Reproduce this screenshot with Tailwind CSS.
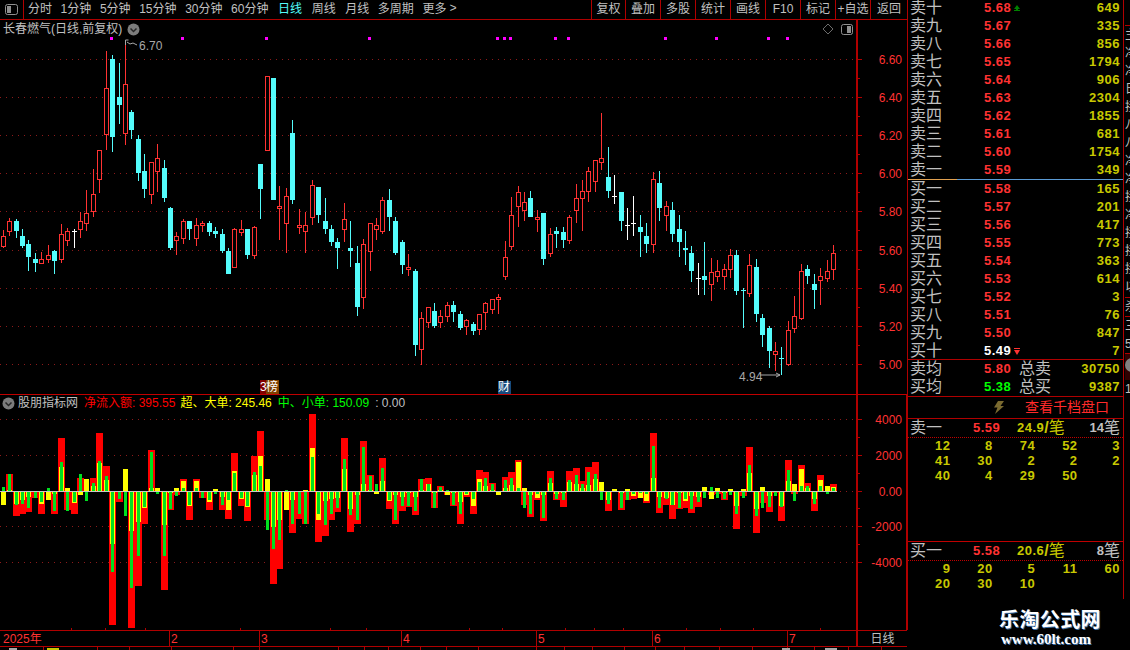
<!DOCTYPE html>
<html lang="zh">
<head>
  <meta charset="UTF-8" />
  <title>长春燃气 日线</title>
  <script src="https://cdn.jsdelivr.net/npm/@tailwindcss/browser@4"></script>
</head>
<body class="h-[650px] w-[1130px] overflow-hidden bg-black text-[12px] text-[#c0c0c0] [font-family:'Liberation_Sans','Noto_Sans_CJK_SC',sans-serif]">
<div class="relative flex h-[650px] w-[1130px]">

  <!-- left: toolbar + charts -->
  <div class="flex w-[907px] flex-col">
    <div class="flex h-[20px] border-b border-[#b00000] leading-[18px]">
      <div class="flex w-[24px] items-center justify-center border-r border-[#b00000]">
        <svg width="13" height="11" viewBox="0 0 13 11"><rect x="0.5" y="0.5" width="12" height="10" rx="2" fill="none" stroke="#909090"/><rect x="2" y="2" width="4" height="7" fill="#909090"/></svg>
      </div>
      <div class="ml-[4px] flex gap-[8.6px]">
        <span>分时</span><span>1分钟</span><span>5分钟</span><span>15分钟</span><span>30分钟</span><span>60分钟</span>
        <span class="ml-[1px] text-[#54fcfc]">日线</span><span class="ml-[1px]">周线</span><span class="ml-[1px]">月线</span><span>多周期</span><span>更多</span>
      </div>
      <span class="ml-[3px] [font-family:'Liberation_Mono']">&gt;</span>
      <div class="ml-auto flex text-center">
        <span class="w-[34px] border-l border-[#b00000]">复权</span>
        <span class="w-[35px] border-l border-[#b00000]">叠加</span>
        <span class="w-[35px] border-l border-[#b00000]">多股</span>
        <span class="w-[35px] border-l border-[#b00000]">统计</span>
        <span class="w-[35px] border-l border-[#b00000]">画线</span>
        <span class="w-[35px] border-l border-[#b00000]">F10</span>
        <span class="w-[35px] border-l border-[#b00000]">标记</span>
        <span class="w-[35px] border-l border-[#b00000]">+自选</span>
        <span class="w-[37px] border-l border-[#b00000]">返回</span>
      </div>
    </div>

    <!-- price chart -->
    <div class="relative h-[375px] border-b border-[#c00000]">
      <div class="absolute left-[3px] top-0 flex h-[18px] items-center gap-[5px]">
        <span>长春燃气(日线,前复权)</span>
        <svg width="13" height="13" viewBox="0 0 13 13"><circle cx="6.5" cy="6.5" r="6" fill="#7c7c7c"/><path d="M3.5 5.5 6.5 8.5 9.5 5.5" fill="none" stroke="#262626" stroke-width="1.5"/></svg>
      </div>
      <span class="absolute left-[260px] top-[360px] flex h-[14px] w-[19px] text-white leading-[14px]"><span class="w-[6px] overflow-hidden bg-[#800000]">3</span><span class="w-[13px] overflow-hidden bg-[#804000]">榜</span></span>
      <span class="absolute left-[498px] top-[361px] h-[13px] w-[13px] bg-[#164a7c] text-white leading-[13px]">财</span>
      <svg id="priceChart" class="block" width="907" height="374" viewBox="0 20 907 374">
        <g id="priceGrid"></g>
        <g id="candles"></g>
        <g fill="#ff00ff" id="marks"></g>
        <g fill="none" stroke="#a8a8a8">
          <path d="M125.5 45V40h3M127 42l3 2 3-1 4 2"/>
          <path d="M760 375h20M776 373l4 2-4 2"/>
          <path d="M828 24l5 5-5 5-5-5z" stroke="#6c6c6c"/>
          <rect x="841.5" y="24.5" width="11" height="10" rx="2" stroke="#909090"/>
        </g>
        <rect x="847" y="26" width="4" height="7" fill="#909090"/>
        <g fill="#ff3232" class="[font-family:'Liberation_Sans']" font-size="12" text-anchor="end">
          <text x="902" y="64">6.60</text><text x="902" y="102">6.40</text><text x="902" y="140">6.20</text>
          <text x="902" y="178">6.00</text><text x="902" y="216">5.80</text><text x="902" y="255">5.60</text>
          <text x="902" y="293">5.40</text><text x="902" y="331">5.20</text><text x="902" y="369">5.00</text>
        </g>
        <g fill="#a8a8a8" font-size="12" class="[font-family:'Liberation_Sans']">
          <text x="139" y="50">6.70</text><text x="739" y="381">4.94</text>
        </g>
      </svg>
    </div>

    <!-- indicator -->
    <div class="relative h-[235px]">
      <div class="absolute left-[2px] top-0 flex h-[16px] items-center whitespace-pre">
        <svg class="mr-[3px]" width="13" height="13" viewBox="0 0 13 13"><circle cx="6.5" cy="6.5" r="6" fill="#7c7c7c"/><path d="M3.5 5.5 6.5 8.5 9.5 5.5" fill="none" stroke="#262626" stroke-width="1.5"/></svg>
        <span>股朋指标网</span>
        <span class="ml-[6px] text-[#ff0000]">净流入额: 395.55</span>
        <span class="ml-[5px] text-[#ffff00]">超、大单: 245.46</span>
        <span class="ml-[6px] text-[#00ff00]">中、小单: 150.09</span>
        <span class="ml-[6px]">: 0.00</span>
      </div>
      <svg id="flowChart" class="block" width="907" height="235" viewBox="0 395 907 235">
        <g id="flowGrid"></g>
        <g id="bars"></g>
        <g fill="#ff3232" font-size="12" class="[font-family:'Liberation_Sans']" text-anchor="end">
          <text x="902" y="424">4000</text><text x="902" y="460">2000</text><text x="902" y="496">0.00</text>
          <text x="902" y="531">-2000</text><text x="902" y="567">-4000</text>
        </g>
      </svg>
    </div>

    <!-- date axis -->
    <div class="relative flex h-[17px] border-y border-[#b00000] text-[#ff3232] leading-[16px]">
      <span class="w-[169px] pl-[3px]">2025年</span>
      <span class="w-[90px] border-l border-[#b00000] pl-[1px]">2</span>
      <span class="w-[142px] border-l border-[#b00000] pl-[1px]">3</span>
      <span class="w-[135px] border-l border-[#b00000] pl-[1px]">4</span>
      <span class="w-[116px] border-l border-[#b00000] pl-[1px]">5</span>
      <span class="w-[135px] border-l border-[#b00000] pl-[1px]">6</span>
      <span class="w-[69px] border-l border-[#b00000] pl-[1px]">7</span>
      <span class="w-[51px] border-l-2 border-[#b00000] text-center text-[#c0c0c0]">日线</span>
    </div>
    <svg id="tabStub" class="block" width="907" height="3"></svg>
  </div>

  <!-- right: order book -->
  <div class="h-[630px] border-l border-[#b00000]">
    <div class="h-[599px] w-[216px] overflow-hidden border-r border-[#b00000] text-[16px]">
      <div class="-mt-px">
        <div class="grid h-[18px] grid-cols-[74px_30px_1fr] items-center pl-[2px] pr-[3px] font-bold leading-[18px] [&>*:first-child]:font-normal"><span>卖十</span><span class="text-[13px] tracking-[0.5px] text-[#ff3232]">5.68</span><span class="flex items-center justify-between text-[13px] tracking-[0.5px] text-[#c8c800]"><svg width="6" height="7" viewBox="0 0 6 7"><path d="M3 0 6 4H4V5H6V6H0V5H2V4H0z" fill="#008000"/></svg><span>649</span></span></div>
        <div class="grid h-[18px] grid-cols-[74px_30px_1fr] items-center pl-[2px] pr-[3px] font-bold leading-[18px] [&>*:first-child]:font-normal"><span>卖九</span><span class="text-[13px] tracking-[0.5px] text-[#ff3232]">5.67</span><span class="text-right text-[13px] tracking-[0.5px] text-[#c8c800]">335</span></div>
        <div class="grid h-[18px] grid-cols-[74px_30px_1fr] items-center pl-[2px] pr-[3px] font-bold leading-[18px] [&>*:first-child]:font-normal"><span>卖八</span><span class="text-[13px] tracking-[0.5px] text-[#ff3232]">5.66</span><span class="text-right text-[13px] tracking-[0.5px] text-[#c8c800]">856</span></div>
        <div class="grid h-[18px] grid-cols-[74px_30px_1fr] items-center pl-[2px] pr-[3px] font-bold leading-[18px] [&>*:first-child]:font-normal"><span>卖七</span><span class="text-[13px] tracking-[0.5px] text-[#ff3232]">5.65</span><span class="text-right text-[13px] tracking-[0.5px] text-[#c8c800]">1794</span></div>
        <div class="grid h-[18px] grid-cols-[74px_30px_1fr] items-center pl-[2px] pr-[3px] font-bold leading-[18px] [&>*:first-child]:font-normal"><span>卖六</span><span class="text-[13px] tracking-[0.5px] text-[#ff3232]">5.64</span><span class="text-right text-[13px] tracking-[0.5px] text-[#c8c800]">906</span></div>
        <div class="grid h-[18px] grid-cols-[74px_30px_1fr] items-center pl-[2px] pr-[3px] font-bold leading-[18px] [&>*:first-child]:font-normal"><span>卖五</span><span class="text-[13px] tracking-[0.5px] text-[#ff3232]">5.63</span><span class="text-right text-[13px] tracking-[0.5px] text-[#c8c800]">2304</span></div>
        <div class="grid h-[18px] grid-cols-[74px_30px_1fr] items-center pl-[2px] pr-[3px] font-bold leading-[18px] [&>*:first-child]:font-normal"><span>卖四</span><span class="text-[13px] tracking-[0.5px] text-[#ff3232]">5.62</span><span class="text-right text-[13px] tracking-[0.5px] text-[#c8c800]">1855</span></div>
        <div class="grid h-[18px] grid-cols-[74px_30px_1fr] items-center pl-[2px] pr-[3px] font-bold leading-[18px] [&>*:first-child]:font-normal"><span>卖三</span><span class="text-[13px] tracking-[0.5px] text-[#ff3232]">5.61</span><span class="text-right text-[13px] tracking-[0.5px] text-[#c8c800]">681</span></div>
        <div class="grid h-[18px] grid-cols-[74px_30px_1fr] items-center pl-[2px] pr-[3px] font-bold leading-[18px] [&>*:first-child]:font-normal"><span>卖二</span><span class="text-[13px] tracking-[0.5px] text-[#ff3232]">5.60</span><span class="text-right text-[13px] tracking-[0.5px] text-[#c8c800]">1754</span></div>
        <div class="grid h-[18px] grid-cols-[74px_30px_1fr] items-center pl-[2px] pr-[3px] font-bold leading-[18px] [&>*:first-child]:font-normal"><span>卖一</span><span class="text-[13px] tracking-[0.5px] text-[#ff3232]">5.59</span><span class="text-right text-[13px] tracking-[0.5px] text-[#c8c800]">349</span></div>
      </div>
      <div class="flex h-px"><div class="w-[49px] bg-[#e0a050]"></div><div class="flex-1 bg-[#5b9bd5]"></div></div>
      <div class="h-[180px] border-b border-[#b00000]">
        <div class="grid h-[18px] grid-cols-[74px_30px_1fr] items-center pl-[2px] pr-[3px] font-bold leading-[18px] [&>*:first-child]:font-normal"><span>买一</span><span class="text-[13px] tracking-[0.5px] text-[#ff3232]">5.58</span><span class="text-right text-[13px] tracking-[0.5px] text-[#c8c800]">165</span></div>
        <div class="grid h-[18px] grid-cols-[74px_30px_1fr] items-center pl-[2px] pr-[3px] font-bold leading-[18px] [&>*:first-child]:font-normal"><span>买二</span><span class="text-[13px] tracking-[0.5px] text-[#ff3232]">5.57</span><span class="text-right text-[13px] tracking-[0.5px] text-[#c8c800]">201</span></div>
        <div class="grid h-[18px] grid-cols-[74px_30px_1fr] items-center pl-[2px] pr-[3px] font-bold leading-[18px] [&>*:first-child]:font-normal"><span>买三</span><span class="text-[13px] tracking-[0.5px] text-[#ff3232]">5.56</span><span class="text-right text-[13px] tracking-[0.5px] text-[#c8c800]">417</span></div>
        <div class="grid h-[18px] grid-cols-[74px_30px_1fr] items-center pl-[2px] pr-[3px] font-bold leading-[18px] [&>*:first-child]:font-normal"><span>买四</span><span class="text-[13px] tracking-[0.5px] text-[#ff3232]">5.55</span><span class="text-right text-[13px] tracking-[0.5px] text-[#c8c800]">773</span></div>
        <div class="grid h-[18px] grid-cols-[74px_30px_1fr] items-center pl-[2px] pr-[3px] font-bold leading-[18px] [&>*:first-child]:font-normal"><span>买五</span><span class="text-[13px] tracking-[0.5px] text-[#ff3232]">5.54</span><span class="text-right text-[13px] tracking-[0.5px] text-[#c8c800]">363</span></div>
        <div class="grid h-[18px] grid-cols-[74px_30px_1fr] items-center pl-[2px] pr-[3px] font-bold leading-[18px] [&>*:first-child]:font-normal"><span>买六</span><span class="text-[13px] tracking-[0.5px] text-[#ff3232]">5.53</span><span class="text-right text-[13px] tracking-[0.5px] text-[#c8c800]">614</span></div>
        <div class="grid h-[18px] grid-cols-[74px_30px_1fr] items-center pl-[2px] pr-[3px] font-bold leading-[18px] [&>*:first-child]:font-normal"><span>买七</span><span class="text-[13px] tracking-[0.5px] text-[#ff3232]">5.52</span><span class="text-right text-[13px] tracking-[0.5px] text-[#c8c800]">3</span></div>
        <div class="grid h-[18px] grid-cols-[74px_30px_1fr] items-center pl-[2px] pr-[3px] font-bold leading-[18px] [&>*:first-child]:font-normal"><span>买八</span><span class="text-[13px] tracking-[0.5px] text-[#ff3232]">5.51</span><span class="text-right text-[13px] tracking-[0.5px] text-[#c8c800]">76</span></div>
        <div class="grid h-[18px] grid-cols-[74px_30px_1fr] items-center pl-[2px] pr-[3px] font-bold leading-[18px] [&>*:first-child]:font-normal"><span>买九</span><span class="text-[13px] tracking-[0.5px] text-[#ff3232]">5.50</span><span class="text-right text-[13px] tracking-[0.5px] text-[#c8c800]">847</span></div>
        <div class="grid h-[18px] grid-cols-[74px_30px_1fr] items-center pl-[2px] pr-[3px] font-bold leading-[18px] [&>*:first-child]:font-normal"><span>买十</span><span class="text-[13px] tracking-[0.5px] text-white">5.49</span><span class="flex items-center justify-between text-[13px] tracking-[0.5px] text-[#c8c800]"><svg width="6" height="7" viewBox="0 0 6 7"><path d="M0 0H6V1H0zM0 2H6L3 7z" fill="#ff3232"/></svg><span>7</span></span></div>
      </div>
      <div class="h-[37px] border-b border-[#b00000]">
        <div class="grid h-[18px] grid-cols-[74px_35px_1fr_auto] items-center pl-[2px] pr-[3px] leading-[18px]"><span>卖均</span><span class="text-[13px] font-bold tracking-[0.5px] text-[#ff3232]">5.80</span><span>总卖</span><span class="text-[13px] font-bold tracking-[0.5px] text-[#c8c800]">30750</span></div>
        <div class="grid h-[18px] grid-cols-[74px_35px_1fr_auto] items-center pl-[2px] pr-[3px] leading-[18px]"><span>买均</span><span class="text-[13px] font-bold tracking-[0.5px] text-[#00ff00]">5.38</span><span>总买</span><span class="text-[13px] font-bold tracking-[0.5px] text-[#c8c800]">9387</span></div>
      </div>
      <div class="flex h-[22px] items-center border-b border-[#b00000] pl-[85px]">
        <svg width="12" height="13" viewBox="0 0 12 13"><path d="M5 0H11L7.5 5H11L2 13 4.5 6.5H1z" fill="#7a6a30"/></svg>
        <span class="ml-[20px] text-[14px] text-[#ff2a2a]">查看千档盘口</span>
      </div>
      <div class="h-[123px] border-b border-[#c00000]">
        <div class="flex h-[19px] items-center border-b border-dotted border-[#c00000] pl-[2px] pr-[3px] leading-[18px]">
          <span class="w-[63px]">卖一</span><span class="w-[44px] text-[13px] font-bold tracking-[0.5px] text-[#ff3232]">5.59</span>
          <span class="text-[13px] font-bold tracking-[0.5px] text-[#c8c800]">24.9</span><span class="font-bold text-[#c8c800]">/</span><span class="text-[#c8c800]">笔</span>
          <span class="ml-auto text-[13px] font-bold">14</span><span>笔</span>
        </div>
        <div class="grid w-[212px] grid-cols-5 text-right text-[13px] font-bold leading-[15px] tracking-[0.5px] text-[#c8c800]">
          <span>12</span><span>8</span><span>74</span><span>52</span><span>3</span>
          <span>41</span><span>30</span><span>2</span><span>2</span><span>2</span>
          <span>40</span><span>4</span><span>29</span><span>50</span><span></span>
        </div>
      </div>
      <div class="flex h-[19px] items-center border-b border-dotted border-[#c00000] pl-[2px] pr-[3px] leading-[18px]">
        <span class="w-[63px]">买一</span><span class="w-[44px] text-[13px] font-bold tracking-[0.5px] text-[#ff3232]">5.58</span>
        <span class="text-[13px] font-bold tracking-[0.5px] text-[#c8c800]">20.6</span><span class="font-bold text-[#c8c800]">/</span><span class="text-[#c8c800]">笔</span>
        <span class="ml-auto text-[13px] font-bold">8</span><span>笔</span>
      </div>
      <div class="grid w-[212px] grid-cols-5 text-right text-[13px] font-bold leading-[15px] tracking-[0.5px] text-[#c8c800]">
        <span>9</span><span>20</span><span>5</span><span>11</span><span>60</span>
        <span>20</span><span>30</span><span>10</span><span></span><span></span>
      </div>
    </div>
  </div>

  <!-- cut-off neighbour column -->
  <div class="w-[6px] overflow-hidden pl-[1px]">
    <div class="mt-[25px] h-[272px] border-t border-[#b00000] leading-[18px] whitespace-nowrap">
      <p>主</p><p>净</p><p>净</p><p>日</p><p>接</p><p>八</p><p>八</p><p>净</p><p>净</p><p>接</p><p>净</p><p>接</p><p>接</p><p>接</p><p>以</p>
    </div>
    <div class="h-[20px] border-y border-[#b00000] leading-[18px]">杀</div>
    <p class="leading-[18px]">三</p>
    <p class="leading-[18px]">5</p>
    <div class="h-[27px] border-t border-[#b00000] bg-[#300000] pt-[4px] leading-[18px]"><span class="block h-[14px] w-[14px] rounded-full bg-[#808080]"></span></div>
    <p class="leading-[18px]">1</p>
  </div>

  <!-- watermark -->
  <div class="absolute left-[999px] top-[606px] text-white [text-shadow:1px_1px_0_#3a6ea5]">
    <div class="text-[20px] leading-[25px] font-bold tracking-[0.4px] [font-family:'Noto_Sans_CJK_SC',sans-serif]">乐淘公式网</div>
    <div class="ml-[2px] text-[15px] leading-[17px] font-bold [font-family:'Liberation_Serif',serif]">www.60lt.com</div>
  </div>
</div>

<script>
  const AXIS = '#b00000';
  const GRID = '#8c1a1a';
  const SVG_NS = 'http://www.w3.org/2000/svg';

  function el(parent, tag, attrs) {
    const node = document.createElementNS(SVG_NS, tag);
    for (const k in attrs) node.setAttribute(k, attrs[k]);
    parent.appendChild(node);
    return node;
  }
  function box(parent, x, y, w, h, fill) {
    el(parent, 'rect', { x, y, width: w, height: h, fill, 'shape-rendering': 'crispEdges' });
  }
  function dotted(parent, y, x1, x2) {
    el(parent, 'line', { x1, x2, y1: y + 0.5, y2: y + 0.5, stroke: GRID, 'stroke-dasharray': '1 5' });
  }

  // x, high, low, body top, body bottom, type (r hollow red, c cyan, w white)
  const candles = [
    [3,230,248,236,247,'r'],[9,218,236,221,232,'r'],[16,219,238,221,231,'c'],[22,229,248,236,246,'c'],[28,240,271,244,257,'c'],
    [35,253,272,259,263,'c'],[41,252,264,259,264,'r'],[48,245,263,255,260,'r'],[54,250,274,251,261,'c'],[61,224,263,234,260,'r'],
    [67,228,246,231,241,'r'],[74,229,248,231,232,'w'],[80,212,238,221,230,'r'],[86,190,231,213,224,'r'],[93,169,217,194,212,'r'],
    [99,150,193,150,180,'r'],[106,51,150,88,135,'r'],[112,55,152,59,137,'c'],[119,63,124,97,105,'c'],[125,41,145,84,134,'r'],
    [131,110,139,112,130,'c'],[138,135,181,139,173,'c'],[144,154,198,171,189,'c'],[151,162,204,162,195,'r'],[157,144,192,158,172,'r'],
    [164,160,202,168,198,'c'],[170,207,250,208,248,'c'],[176,232,255,236,241,'r'],[183,219,244,221,239,'r'],[189,221,240,221,229,'c'],
    [196,218,246,225,239,'r'],[202,221,232,223,226,'r'],[209,221,236,223,232,'c'],[215,227,238,231,234,'c'],[222,229,253,234,251,'c'],
    [228,248,274,251,274,'c'],[234,228,268,229,268,'r'],[241,220,236,229,233,'r'],[247,229,259,229,255,'c'],[254,226,259,227,256,'r'],
    [260,164,219,164,189,'c'],[267,76,151,76,151,'r'],[273,78,200,78,200,'c'],[279,186,240,206,209,'r'],[286,188,253,196,224,'r'],
    [292,120,204,133,200,'c'],[299,209,234,225,228,'r'],[305,212,253,225,232,'r'],[312,180,225,185,218,'r'],[318,187,223,187,215,'c'],
    [325,198,234,221,229,'c'],[331,225,246,229,242,'c'],[337,238,269,242,248,'c'],[344,203,242,219,230,'r'],[350,221,267,248,251,'c'],
    [357,246,316,263,307,'c'],[363,239,309,244,298,'r'],[370,223,271,223,252,'r'],[376,218,240,225,230,'r'],[382,197,234,200,232,'r'],
    [389,189,231,200,217,'c'],[395,217,255,221,253,'c'],[402,240,274,242,265,'c'],[408,254,276,267,270,'r'],[415,269,356,271,345,'c'],
    [421,312,365,318,350,'r'],[428,307,328,307,323,'r'],[434,303,328,311,326,'c'],[440,310,328,316,323,'r'],[447,302,322,305,317,'r'],
    [453,301,322,305,312,'c'],[460,311,330,314,328,'c'],[466,319,335,320,327,'r'],[473,322,335,324,331,'c'],[479,314,335,314,330,'r'],
    [485,302,330,303,313,'r'],[492,299,314,299,310,'r'],[498,294,314,297,300,'r'],[505,241,280,257,277,'r'],[511,197,250,215,247,'r'],
    [518,186,227,192,207,'r'],[524,192,221,202,211,'r'],[530,191,217,198,217,'c'],[537,210,232,217,220,'r'],[543,213,265,213,259,'c'],
    [550,228,257,234,254,'r'],[556,227,248,231,234,'c'],[563,227,248,232,240,'c'],[569,215,244,217,241,'r'],[576,184,223,198,211,'r'],
    [582,180,231,191,199,'r'],[588,167,202,171,192,'r'],[595,160,192,160,182,'r'],[601,113,170,158,163,'r'],[608,147,198,177,191,'c'],
    [614,175,204,196,197,'w'],[621,192,231,192,221,'c'],[627,208,240,225,226,'w'],[633,196,236,223,224,'w'],[640,215,257,227,232,'c'],
    [646,223,253,236,244,'c'],[653,172,253,179,245,'r'],[659,171,221,183,208,'c'],[666,201,231,206,216,'r'],[672,202,242,210,234,'c'],
    [679,215,257,229,242,'c'],[685,231,265,248,250,'c'],[691,246,282,253,271,'c'],[698,263,295,278,279,'w'],[704,242,295,276,280,'c'],
    [711,258,301,272,285,'r'],[717,260,282,271,277,'r'],[724,264,290,269,277,'r'],[730,249,278,255,270,'r'],[736,250,295,255,291,'c'],
    [743,288,328,290,291,'c'],[749,254,297,265,294,'r'],[756,259,322,267,314,'c'],[762,314,347,318,335,'c'],[769,326,368,328,351,'c'],
    [775,342,371,351,355,'r'],[781,347,375,358,359,'c'],[788,321,366,330,365,'r'],[794,296,333,316,329,'r'],[801,264,320,271,319,'r'],
    [807,265,284,269,276,'c'],[814,274,309,284,290,'c'],[820,268,305,276,281,'r'],[827,260,282,271,279,'r'],[833,245,280,253,270,'r']
  ];

  // red, yellow, green column heights, in thirds of a pixel (from the zoomed reference)
  const flows = [
    [0,-40,13],[52,3,52],[-73,-35,-40],[-65,-25,-37],[-60,-15,-47],[-18,0,-17],[-65,-37,-30],[0,-23,10],[-65,-5,-58],[160,72,88],
    [-53,10,-58],[-65,-33,-30],[40,-10,52],[0,35,-28],[40,15,25],[175,85,90],[76,33,45],[-398,-157,-240],[-30,0,-22],[0,67,-73],
    [-407,-118,-287],[-283,-90,-193],[-97,-48,-46],[124,8,118],[0,10,-7],[-293,-100,-193],[-55,-2,-52],[-8,10,-13],[37,30,10],[-83,-43,-40],
    [37,30,10],[-17,0,-17],[-55,-30,-25],[0,7,-7],[-55,-15,-40],[-80,-55,-25],[115,60,55],[-42,-22,-18],[-88,-45,-43],[106,48,58],
    [181,106,76],[-83,37,-115],[-275,-105,-170],[-230,-85,-145],[0,-53,4],[-122,-25,-97],[-80,0,-67],[-97,4,-97],[232,130,103],[-149,-83,-65],
    [-131,-28,-100],[-83,-20,-65],[-60,-18,-47],[160,67,97],[-119,-50,-70],[-95,-10,-85],[151,22,133],[49,3,46],[0,-7,20],[100,31,70],
    [-52,-28,-25],[-95,-10,-85],[-58,-16,-42],[-46,-3,-43],[-70,-14,-58],[37,3,37],[40,22,20],[-49,-2,-47],[16,4,12],[-10,-10,3],
    [-43,-2,-40],[-97,-30,-67],[-16,-9,-7],[-65,-43,-20],[64,37,28],[58,15,40],[24,4,22],[0,-10,0],[43,10,34],[58,18,40],
    [94,88,10],[-38,10,-47],[-74,-10,-65],[-25,-18,-5],[-88,-10,-77],[61,25,40],[-25,-7,-20],[-46,-3,-25],[61,28,34],[70,20,49],
    [31,10,22],[73,18,58],[88,37,52],[0,28,-25],[-58,-23,-37],[0,7,0],[-55,-2,-47],[-25,7,-25],[-22,-13,-5],[-18,-18,-3],
    [-34,-26,-7],[175,40,136],[-64,-14,-49],[-40,-18,-20],[-80,-40,-40],[-52,-4,-47],[-49,-27,-20],[-64,-12,-52],[-46,-15,-29],[0,13,-17],
    [-10,-22,13],[-6,10,-17],[-25,-4,-22],[0,7,-8],[-112,-43,-67],[-13,7,-17],[133,55,78],[-122,-50,-73],[-34,13,-47],[-61,-13,-46],
    [-4,0,-13],[-88,-43,-46],[94,30,64],[-7,22,-28],[79,67,16],[25,10,16],[-58,-22,-37],[49,34,16],[0,16,-7],[22,13,10]
  ];

  // price panel: grid, axis, ticks
  const priceGrid = document.getElementById('priceGrid');
  [59,97,135,173,211,250,288,326,364].forEach(y => {
    dotted(priceGrid, y, 0, 856);
    box(priceGrid, 858, y, 4, 1, AXIS);
  });
  [78,116,154,192,230,269,307,345].forEach(y => box(priceGrid, 858, y, 2, 1, AXIS));
  box(priceGrid, 856, 20, 2, 374, AXIS);

  const cg = document.getElementById('candles');
  candles.forEach(([x, hi, lo, top, bot, t]) => {
    if (t === 'r') {
      box(cg, x, hi, 1, top - hi, '#ff3232');
      box(cg, x, bot, 1, lo - bot, '#ff3232');
      el(cg, 'rect', { x: x - 1.5, y: top + 0.5, width: 4, height: bot - top - 1, fill: '#000', stroke: '#ff3232' });
    } else {
      const color = t === 'c' ? '#54fcfc' : '#ffffff';
      box(cg, x, hi, 1, lo - hi, color);
      box(cg, x - 2, top, 5, bot - top, color);
    }
  });

  const marks = document.getElementById('marks');
  [111,182,266,369,497,504,510,555,568,665,716,768,787].forEach(x => box(marks, x - 1, 37, 3, 3, '#ff00ff'));

  // flow panel
  const flowGrid = document.getElementById('flowGrid');
  [419,455,491,526,562].forEach(y => {
    dotted(flowGrid, y, 0, 856);
    box(flowGrid, 858, y, 4, 1, AXIS);
  });
  [437,473,508,544].forEach(y => box(flowGrid, 858, y, 2, 1, AXIS));
  box(flowGrid, 856, 395, 2, 235, AXIS);
  box(flowGrid, 906, 395, 1, 235, AXIS);

  function column(g, x, w, v, fill) {
    if (!v) return;
    const h = Math.round(Math.abs(v) / 3);
    box(g, x, v > 0 ? 491 - h : 492, w, h, fill);
  }
  const bg = document.getElementById('bars');
  flows.forEach(([r, y, g], i) => {
    const x = candles[i][0];
    column(bg, x - 3, 7, r, '#ff0000');
    column(bg, x - 2, 5, y, '#ffff00');
    column(bg, x - 1, 3, g, '#00e020');
  });
  box(bg, 0, 491, 837, 1, '#c8c8c8');

  // date ticks sit on the top edge of the date row, tabs stub below it
  [71,105,145,240,330,366,469,502,565,594,623,686,720,753,820].forEach(x => box(flowGrid, x, 628, 1, 2, AXIS));
  const tabs = document.getElementById('tabStub');
  [43,97,129,171,233,259,338,364,388,420,446,478,536,564,592,624,655,684,719,752,787,814,848,881].forEach(x => box(tabs, x, 0, 1, 3, AXIS));
  box(tabs, 9, 1, 8, 2, '#a8a8a8');
  box(tabs, 47, 1, 12, 2, '#c8c800');
  box(tabs, 782, 1, 8, 2, '#a8a8a8');
  box(tabs, 825, 1, 12, 2, '#a8a8a8');
</script>
</body>
</html>
